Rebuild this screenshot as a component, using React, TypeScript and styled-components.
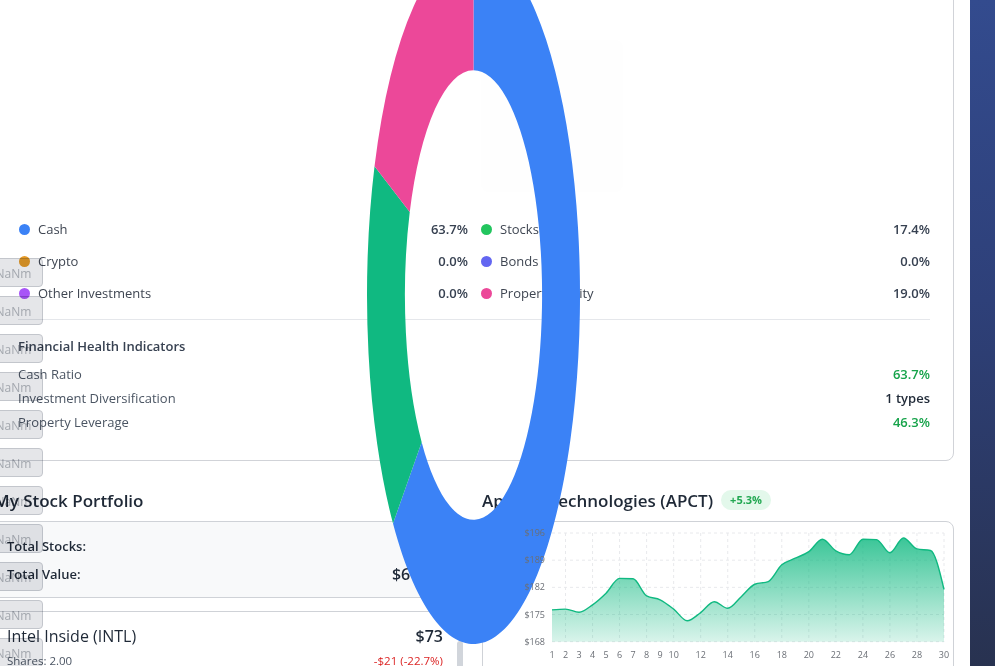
import styled, { createGlobalStyle } from 'styled-components';

const GlobalStyle = createGlobalStyle`
	html, body {
		margin: 0;
		padding: 0;
		background: #ffffff;
		overflow: hidden;
	}
	body {
		font-family: 'Open Sans', 'Noto Sans', sans-serif;
		color: #1f2937;
		-webkit-font-smoothing: antialiased;
	}
`;

type Slice = { label: string; color: string; value: number };

const legendLeft: Slice[] = [
	{ label: 'Cash', color: '#3b82f6', value: 63.7 },
	{ label: 'Crypto', color: '#e59a27', value: 0 },
	{ label: 'Other Investments', color: '#a855f7', value: 0 },
];

const legendRight: Slice[] = [
	{ label: 'Stocks', color: '#22c55e', value: 17.4 },
	{ label: 'Bonds', color: '#6366f1', value: 0 },
	{ label: 'Property Equity', color: '#ec4899', value: 19.0 },
];

// donut slices, clockwise from 12 o'clock
const donutSlices = [
	{ color: '#3b82f6', value: 63.7 },
	{ color: '#10b981', value: 17.4 },
	{ color: '#ec4899', value: 19.0 },
];

const prices = [
	176.2, 176.4, 175.6, 177.5, 180.5, 184.3, 184.2, 179.8, 178.8, 176.4,
	173.4, 175.5, 178.3, 176.6, 179.6, 182.8, 183.5, 187.8, 189.5, 191.2,
	194.4, 191.4, 190.4, 194.4, 194.3, 190.9, 194.7, 191.9, 191.5, 181.5,
];

const Page = styled.div`
	position: relative;
	display: flex;
	height: 666px;
	overflow: hidden;
`;

const Main = styled.main`
	flex: 1;
	min-width: 0;
	padding-right: 16px;
`;

const SideRail = styled.aside`
	width: 25px;
	flex-shrink: 0;
	background: linear-gradient(180deg, #334b8e 0%, #2e4079 45%, #283250 100%);
`;

const Content = styled.div`
	margin-left: -6px;
`;

const Card = styled.section`
	position: relative;
	margin-top: -24px;
	border: 1px solid #d1d3d8;
	border-radius: 8px;
	padding: 0 23px 26px 23px;
	background: #ffffff;
`;

const PieArea = styled.div`
	position: relative;
	height: 236px;
`;

const Tooltip = styled.div`
	position: absolute;
	left: 463px;
	top: 63px;
	width: 142px;
	height: 152px;
	border-radius: 8px;
	background: #fefefe;
`;

const LegendGrid = styled.div`
	display: grid;
	grid-template-columns: 1fr 1fr;
	column-gap: 12px;
`;

const LegendRow = styled.div`
	display: flex;
	align-items: center;
	height: 32px;
	font-size: 13px;
`;

const Dot = styled.span<{ $color: string }>`
	width: 11px;
	height: 11px;
	border-radius: 50%;
	background: ${(p) => p.$color};
	margin: 0 8px 0 1px;
	flex-shrink: 0;
`;

const LegendLabel = styled.span`
	flex: 1;
	color: #3f4652;
`;

const LegendValue = styled.span`
	font-weight: 600;
	color: #374151;
`;

const Divider = styled.hr`
	margin: 10px 0 0;
	border: none;
	border-top: 1px solid #e5e7eb;
`;

const Health = styled.div`
	padding-top: 16px;
`;

const HealthTitle = styled.h4`
	margin: 0 0 6px;
	font-size: 13px;
	line-height: 20px;
	font-weight: 600;
	color: #374151;
`;

const HealthRow = styled.div`
	display: flex;
	justify-content: space-between;
	align-items: center;
	height: 24px;
	font-size: 13px;
	color: #4b5563;
`;

const HealthValue = styled.span<{ $good?: boolean }>`
	font-weight: 600;
	color: ${(p) => (p.$good ? '#16a34a' : '#1f2937')};
`;

const Lower = styled.div`
	display: grid;
	grid-template-columns: 463px 1fr;
	column-gap: 25px;
	margin-top: 25px;
`;

const SectionHead = styled.div`
	display: flex;
	align-items: center;
	gap: 8px;
	height: 28px;
	margin-bottom: 7px;
`;

const SectionTitle = styled.h2`
	margin: 0;
	font-size: 17px;
	font-weight: 600;
	color: #1f2937;
	white-space: nowrap;
`;

const Badge = styled.span`
	padding: 2px 9px;
	border-radius: 999px;
	background: #e3f8eb;
	color: #22a852;
	font-size: 11px;
	font-weight: 700;
	line-height: 16px;
`;

const Summary = styled.div`
	border: 1px solid #cfd2d7;
	border-radius: 6px;
	background: #f8f9fa;
	padding: 10px 14px 9px 12px;
`;

const SummaryRow = styled.div`
	display: flex;
	justify-content: space-between;
	align-items: center;
	height: 28px;
	font-size: 13px;
	font-weight: 600;
	color: #1f2937;
`;

const SummaryValue = styled.span`
	font-size: 16px;
`;

const StockList = styled.div`
	position: relative;
	margin-top: 13px;
	border-top: 1px solid #cfd2d7;
	height: 80px;
	padding-right: 14px;
`;

const ScrollThumb = styled.div`
	position: absolute;
	right: -6px;
	top: 29px;
	width: 6px;
	height: 60px;
	border-radius: 3px;
	background: #d1d5db;
`;

const StockItem = styled.div`
	padding: 13px 0 0 13px;
`;

const StockLine = styled.div`
	display: flex;
	justify-content: space-between;
	align-items: baseline;
`;

const StockName = styled.span`
	font-size: 16px;
	line-height: 22px;
	font-weight: 500;
	color: #1f2937;
`;

const StockPrice = styled.span`
	font-size: 16px;
	font-weight: 600;
	color: #1f2937;
`;

const StockMeta = styled.span<{ $loss?: boolean }>`
	margin-top: 5px;
	font-size: 11.5px;
	line-height: 18px;
	color: ${(p) => (p.$loss ? '#dc2626' : '#4b5563')};
`;

const ChartCard = styled.div`
	border: 1px solid #cfd2d7;
	border-radius: 8px;
	height: 160px;
`;

// axis labels sit above the donut in the reference, so the svg gets its own layer
const ChartSvg = styled.svg`
	position: relative;
	z-index: 6;
	display: block;
`;

const DonutOverlay = styled.svg`
	position: absolute;
	left: 367px;
	top: -54px;
	width: 213px;
	height: 698px;
	z-index: 5;
	pointer-events: none;
`;

const ButtonStack = styled.div`
	position: absolute;
	left: -16px;
	top: 258px;
	display: flex;
	flex-direction: column;
	gap: 9px;
	z-index: 7;
	mix-blend-mode: multiply;
`;

const GhostButton = styled.button`
	width: 59px;
	height: 29px;
	padding: 2px 0 0;
	border: 1px solid #c3c6cc;
	border-radius: 4px;
	background: #e5e6e9;
	color: #a3a7ae;
	font-family: 'Open Sans', sans-serif;
	font-size: 12px;
	line-height: 1;
`;

const pt = (r: number, deg: number) => {
	const a = (deg * Math.PI) / 180;
	return `${(r * Math.sin(a)).toFixed(4)} ${(-r * Math.cos(a)).toFixed(4)}`;
};

const arcPath = (a0: number, a1: number, ro: number, ri: number) => {
	const large = a1 - a0 > 180 ? 1 : 0;
	return `M ${pt(ro, a0)} A ${ro} ${ro} 0 ${large} 1 ${pt(ro, a1)} L ${pt(ri, a1)} A ${ri} ${ri} 0 ${large} 0 ${pt(ri, a0)} Z`;
};

const Donut = () => {
	const total = donutSlices.reduce((s, d) => s + d.value, 0);
	let start = 0;
	return (
		<DonutOverlay viewBox="-1 -1 2 2" preserveAspectRatio="none">
			{donutSlices.map((s) => {
				const sweep = (s.value / total) * 360;
				const d = arcPath(start, start + sweep, 1, 0.644);
				start += sweep;
				return <path key={s.color} d={d} fill={s.color} />;
			})}
		</DonutOverlay>
	);
};

// monotone-x curve, same idea as d3's curveMonotoneX
const monotone = (pts: [number, number][]) => {
	const n = pts.length;
	const sec: number[] = [];
	for (let i = 0; i < n - 1; i++) {
		sec.push((pts[i + 1][1] - pts[i][1]) / (pts[i + 1][0] - pts[i][0]));
	}
	const t: number[] = new Array(n).fill(0);
	for (let i = 1; i < n - 1; i++) {
		const s0 = sec[i - 1];
		const s1 = sec[i];
		const h0 = pts[i][0] - pts[i - 1][0];
		const h1 = pts[i + 1][0] - pts[i][0];
		const p = (s0 * h1 + s1 * h0) / (h0 + h1);
		t[i] = (Math.sign(s0) + Math.sign(s1)) * Math.min(Math.abs(s0), Math.abs(s1), 0.5 * Math.abs(p)) || 0;
	}
	t[0] = (3 * sec[0] - t[1]) / 2;
	t[n - 1] = (3 * sec[n - 2] - t[n - 2]) / 2;
	let d = `M ${pts[0][0]} ${pts[0][1]}`;
	for (let i = 0; i < n - 1; i++) {
		const [x0, y0] = pts[i];
		const [x1, y1] = pts[i + 1];
		const dx = (x1 - x0) / 3;
		d += ` C ${x0 + dx} ${y0 + dx * t[i]} ${x1 - dx} ${y1 - dx * t[i + 1]} ${x1} ${y1}`;
	}
	return d;
};

const PriceChart = () => {
	const left = 69;
	const right = 461;
	const top = 11;
	const bottom = 119.7;
	const xFor = (i: number) => left + ((i - 1) * (right - left)) / 29;
	const yFor = (v: number) => top + ((196 - v) * (bottom - top)) / 28;
	const pts = prices.map((v, i) => [xFor(i + 1), yFor(v)] as [number, number]);
	const line = monotone(pts);
	const area = `${line} L ${right} ${bottom} L ${left} ${bottom} Z`;
	const yTicks = [196, 189, 182, 175, 168];
	const xTicks = [1, 2, 3, 4, 5, 6, 7, 8, 9, 10, 12, 14, 16, 18, 20, 22, 24, 26, 28, 30];
	const vGrid = [2, 4, 6, 8, 10, 12, 14, 16, 18, 20, 22, 24, 26, 28, 30];

	return (
		<ChartSvg width="470" height="158">
			<defs>
				<linearGradient id="priceFill" x1="0" y1="0" x2="0" y2="1">
					<stop offset="0%" stopColor="#10b981" stopOpacity={0.82} />
					<stop offset="100%" stopColor="#10b981" stopOpacity={0.16} />
				</linearGradient>
			</defs>
			<g stroke="#e8e9ec" strokeDasharray="3 3" strokeWidth={1}>
				{yTicks.map((v) => (
					<line key={v} x1={left} x2={right} y1={yFor(v)} y2={yFor(v)} />
				))}
				{vGrid.map((i) => (
					<line key={i} x1={xFor(i)} x2={xFor(i)} y1={top} y2={bottom} />
				))}
			</g>
			<path d={area} fill="url(#priceFill)" />
			<path d={line} fill="none" stroke="#10b981" strokeWidth={1.4} />
			<g fontFamily="'Open Sans', sans-serif" fontSize="9" fill="#6b6f76">
				{yTicks.map((v) => (
					<text key={v} x={62} y={yFor(v) + 3} textAnchor="end">
						${v}
					</text>
				))}
				{xTicks.map((i) => (
					<text key={i} x={xFor(i)} y={136} textAnchor="middle">
						{i}
					</text>
				))}
			</g>
		</ChartSvg>
	);
};

const LegendColumn = ({ items }: { items: Slice[] }) => (
	<div>
		{items.map((s) => (
			<LegendRow key={s.label}>
				<Dot $color={s.color} />
				<LegendLabel>{s.label}</LegendLabel>
				<LegendValue>{s.value.toFixed(1)}%</LegendValue>
			</LegendRow>
		))}
	</div>
);

const App = () => {
	return (
		<>
			<GlobalStyle />
			<Page>
				<Main>
					<Content>
						<Card>
							<PieArea>
								<Tooltip />
							</PieArea>
							<LegendGrid>
								<LegendColumn items={legendLeft} />
								<LegendColumn items={legendRight} />
							</LegendGrid>
							<Divider />
							<Health>
								<HealthTitle>Financial Health Indicators</HealthTitle>
								<HealthRow>
									<span>Cash Ratio</span>
									<HealthValue $good>63.7%</HealthValue>
								</HealthRow>
								<HealthRow>
									<span>Investment Diversification</span>
									<HealthValue>1 types</HealthValue>
								</HealthRow>
								<HealthRow>
									<span>Property Leverage</span>
									<HealthValue $good>46.3%</HealthValue>
								</HealthRow>
							</Health>
						</Card>

						<Lower>
							<div>
								<SectionHead>
									<SectionTitle>My Stock Portfolio</SectionTitle>
								</SectionHead>
								<Summary>
									<SummaryRow>
										<span>Total Stocks:</span>
										<SummaryValue>1</SummaryValue>
									</SummaryRow>
									<SummaryRow>
										<span>Total Value:</span>
										<SummaryValue>$61.50</SummaryValue>
									</SummaryRow>
								</Summary>
								<StockList>
									<ScrollThumb />
									<StockItem>
										<StockLine>
											<StockName>Intel Inside (INTL)</StockName>
											<StockPrice>$73</StockPrice>
										</StockLine>
										<StockLine>
											<StockMeta>Shares: 2.00</StockMeta>
											<StockMeta $loss>-$21 (-22.7%)</StockMeta>
										</StockLine>
									</StockItem>
								</StockList>
							</div>
							<div>
								<SectionHead>
									<SectionTitle>Applied Technologies (APCT)</SectionTitle>
									<Badge>+5.3%</Badge>
								</SectionHead>
								<ChartCard>
									<PriceChart />
								</ChartCard>
							</div>
						</Lower>
					</Content>
				</Main>
				<SideRail />
				<Donut />
				<ButtonStack>
					{Array.from({ length: 11 }).map((_, i) => (
						<GhostButton key={i}>NaNm</GhostButton>
					))}
				</ButtonStack>
			</Page>
		</>
	);
};

export default App;
